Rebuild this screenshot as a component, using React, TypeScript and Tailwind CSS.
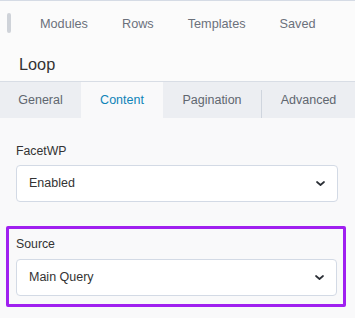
const FONT = "font-['Liberation_Sans','Helvetica',Arial,sans-serif]";

function Chevron() {
  return (
    <svg width="9" height="5" viewBox="0 0 9 5" fill="none" className="shrink-0">
      <path d="M1 1 L4.5 4 L8 1" stroke="#2b2f36" strokeWidth="1.7" strokeLinecap="round" strokeLinejoin="round" />
    </svg>
  );
}

function SelectBox({ value }: { value: string }) {
  return (
    <div className="flex h-[37px] items-center justify-between rounded-[4px] border border-[#d3dae5] bg-white pl-[12px] pr-[12px] text-[12.5px] text-[#333]">
      <span>{value}</span>
      <Chevron />
    </div>
  );
}

const NAV = ["Modules", "Rows", "Templates", "Saved"];

export default function App() {
  return (
    <div className={`h-[318px] w-[355px] overflow-hidden bg-[#f9f9fa] ${FONT}`}>
      <div className="border-t border-[#d5dbe5] bg-[#fbfbfb]">
        <div className="flex h-[46px] items-center">
          <div className="ml-[7px] h-[20px] w-[4px] -translate-y-[1px] rounded-full bg-[#cfd3d9]" />
          <nav className="ml-[29px] flex gap-[34px] pt-[2px] text-[12.7px] text-[#6b717b]">
            {NAV.map((n) => (
              <span key={n}>{n}</span>
            ))}
          </nav>
        </div>
        <h1 className="h-[34px] pl-[19px] pt-[7px] text-[16.3px] leading-[20px] text-[#333]">Loop</h1>
      </div>

      <div className="flex h-[37px] border-t border-[#d8dde5] bg-[#eceef2] text-[12.5px] text-[#60666f]">
        <div className="flex w-[81px] items-center justify-center">General</div>
        <div className="flex w-[82px] items-center justify-center bg-[#f9f9fa] text-[#0f84b8]">Content</div>
        <div className="flex w-[98px] items-center justify-center">Pagination</div>
        <div className="mt-[8px] w-px bg-[#cfd5de]" />
        <div className="flex flex-1 items-center justify-center">Advanced</div>
      </div>

      <div className="pl-[16px] pr-[17px] pt-[25px]">
        <div>
          <div className="mb-[6px] text-[12.3px] leading-[16px] text-[#333]">FacetWP</div>
          <SelectBox value="Enabled" />
        </div>

        <div className="-ml-[10px] -mr-[8px] mt-[24px] rounded-[2px] border-[3px] border-[#a020f0] pb-[8px] pl-[7px] pr-[6px] pt-[7px]">
          <div className="mb-[7px] text-[12.3px] leading-[16px] text-[#333]">Source</div>
          <SelectBox value="Main Query" />
        </div>
      </div>
    </div>
  );
}
